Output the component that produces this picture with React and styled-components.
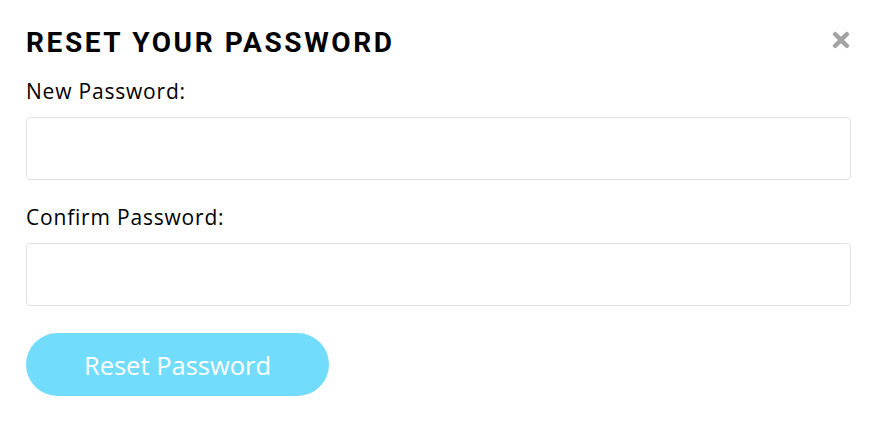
import React from 'react'
import styled, { createGlobalStyle } from 'styled-components'
import { FaTimes } from 'react-icons/fa'

const GlobalStyle = createGlobalStyle`
  html, body {
    margin: 0;
    padding: 0;
    background: #fff;
  }
  * {
    box-sizing: border-box;
  }
`

const Modal = styled.div`
  width: 872px;
  height: 435px;
  padding: 24px 19px 0 26px;
  background: #fff;
`

const Header = styled.div`
  display: flex;
  align-items: flex-start;
  justify-content: space-between;
`

const Title = styled.h1`
  margin: 0;
  font-family: Roboto, "Liberation Sans", sans-serif;
  font-weight: 700;
  font-size: 28px;
  line-height: 38px;
  letter-spacing: 2.6px;
  color: #000;
`

const Close = styled.button`
  border: none;
  background: none;
  padding: 0;
  margin-top: 4px;
  color: #a3a3a3;
  font-size: 24px;
  line-height: 1;
  cursor: pointer;
  display: flex;
`

const Form = styled.form`
  display: flex;
  flex-direction: column;
  margin-top: 16px;
`

const Field = styled.div`
  display: flex;
  flex-direction: column;
  margin-bottom: 24px;
`

const Label = styled.label`
  font-family: "Open Sans", sans-serif;
  font-size: 21px;
  line-height: 26px;
  letter-spacing: 0.8px;
  color: #000;
  margin-bottom: 13px;
`

const Input = styled.input`
  width: 825px;
  height: 63px;
  border: 1px solid #e2e2e2;
  border-radius: 4px;
  padding: 0 14px;
  font-family: "Open Sans", sans-serif;
  font-size: 18px;
  outline: none;
`

const Button = styled.button`
  align-self: flex-start;
  width: 303px;
  height: 63px;
  margin-top: 3px;
  border: none;
  border-radius: 32px;
  background-color: #72dcfd;
  color: #fff;
  font-family: "Open Sans", sans-serif;
  font-size: 25.5px;
  cursor: pointer;
`

const App = () => {
    return (
        <>
            <GlobalStyle />
            <Modal>
                <Header>
                    <Title>RESET YOUR PASSWORD</Title>
                    <Close aria-label="close"><FaTimes /></Close>
                </Header>
                <Form onSubmit={(e) => e.preventDefault()}>
                    <Field>
                        <Label>New Password:</Label>
                        <Input type="password" />
                    </Field>
                    <Field>
                        <Label>Confirm Password:</Label>
                        <Input type="password" />
                    </Field>
                    <Button type="submit">Reset Password</Button>
                </Form>
            </Modal>
        </>
    )
}

export default App
